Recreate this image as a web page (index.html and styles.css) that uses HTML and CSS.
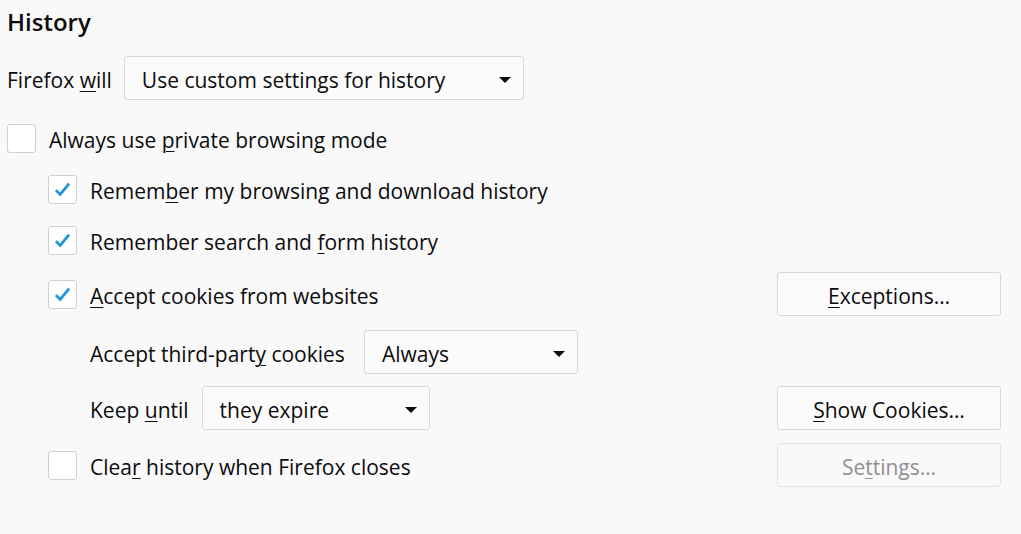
FILE: index.html
```html
<!DOCTYPE html>
<html lang="en">
<head>
  <meta charset="utf-8">
  <title>History</title>
  <link rel="stylesheet" href="styles.css">
</head>
<body>
  <h1 class="heading">History</h1>

  <div class="row row-will">
    <span class="label">Firefox <u>w</u>ill</span>
    <div class="select select-mode"><span class="label">Use custom settings for history</span><span class="arrow"></span></div>
  </div>

  <div class="row row-check row-private">
    <span class="box"></span>
    <span class="label">Always use <u>p</u>rivate browsing mode</span>
  </div>

  <div class="indent">
    <div class="row row-check row-first">
      <span class="box checked"><svg viewBox="0 0 16 16" width="17" height="17"><path d="M1.8 8.6 L5.8 12.6 L14.2 2.4" /></svg></span>
      <span class="label">Remem<u>b</u>er my browsing and download history</span>
    </div>

    <div class="row row-check row-second">
      <span class="box checked"><svg viewBox="0 0 16 16" width="17" height="17"><path d="M1.8 8.6 L5.8 12.6 L14.2 2.4" /></svg></span>
      <span class="label">Remember search and <u>f</u>orm history</span>
    </div>

    <div class="row row-tall row-cookies">
      <div class="left">
        <span class="box checked"><svg viewBox="0 0 16 16" width="17" height="17"><path d="M1.8 8.6 L5.8 12.6 L14.2 2.4" /></svg></span>
        <span class="label"><u>A</u>ccept cookies from websites</span>
      </div>
      <button class="btn"><u>E</u>xceptions…</button>
    </div>

    <div class="sub">
      <div class="row row-tall row-third">
        <span class="label">Accept third-part<u>y</u> cookies</span>
        <div class="select select-third"><span class="label">Always</span><span class="arrow"></span></div>
      </div>
    </div>

    <div class="row row-tall row-keep">
      <div class="left sub">
        <span class="label">Keep <u>u</u>ntil</span>
        <div class="select select-keep"><span class="label">they expire</span><span class="arrow"></span></div>
      </div>
      <button class="btn"><u>S</u>how Cookies…</button>
    </div>

    <div class="row row-tall row-clear">
      <div class="left">
        <span class="box"></span>
        <span class="label">Clea<u>r</u> history when Firefox closes</span>
      </div>
      <button class="btn" disabled>Se<u>t</u>tings…</button>
    </div>
  </div>
</body>
</html>
```

FILE: styles.css
```css
html, body {
  height: 100%;
  margin: 0;
}

body {
  background-color: #f9f9fa;
  color: #0c0c0d;
  font-family: "Open Sans", "Noto Sans", sans-serif;
  font-size: 21px;
  padding: 0 20px 0 7px;
  overflow: hidden;
}

u {
  text-decoration: underline;
  text-underline-offset: 3px;
  text-decoration-thickness: 1px;
}

.heading {
  margin: 0;
  height: 56px;
  padding-top: 5px;
  box-sizing: border-box;
  font-size: 24px;
  font-weight: 600;
  line-height: 34px;
}

.label {
  padding-top: 3px;
}

.row {
  display: flex;
  align-items: center;
}

.row-will {
  height: 44px;
  gap: 12px;
}

.row-check {
  height: 29px;
  gap: 13px;
}

.row-private {
  margin-top: 24px;
}

.indent {
  padding-left: 41px;
}

.row-first,
.row-second {
  margin-top: 22px;
}

.row-tall {
  height: 44px;
  justify-content: space-between;
}

.row-cookies {
  margin-top: 17px;
}

.row-third {
  margin-top: 14px;
  justify-content: flex-start;
  gap: 19px;
}

.row-keep {
  margin-top: 12px;
}

.row-clear {
  margin-top: 13px;
}

.left {
  display: flex;
  align-items: center;
  gap: 13px;
}

.sub {
  padding-left: 42px;
}

.left.sub {
  gap: 13px;
}

.box {
  width: 27px;
  height: 27px;
  border: 1px solid #d0d0d3;
  border-radius: 3px;
  background: #fff;
  display: flex;
  align-items: center;
  justify-content: center;
  flex: none;
}

.box svg path {
  fill: none;
  stroke: #1f95dc;
  stroke-width: 2.6;
  stroke-linejoin: miter;
}

.select {
  position: relative;
  border: 1px solid #d7d7db;
  border-radius: 3px;
  background: #fbfbfb;
  display: flex;
  align-items: center;
  padding-left: 17px;
  box-sizing: border-box;
  height: 44px;
}

.select-mode {
  width: 400px;
}

.select-third {
  width: 214px;
}

.select-keep {
  width: 228px;
}

.arrow {
  position: absolute;
  right: 12px;
  top: 20px;
  width: 0;
  height: 0;
  border-left: 6px solid transparent;
  border-right: 6px solid transparent;
  border-top: 6px solid #0c0c0d;
}

.btn {
  width: 224px;
  height: 44px;
  border: 1px solid #d7d7db;
  border-radius: 3px;
  background: #fbfbfb;
  color: #0c0c0d;
  font-family: inherit;
  font-size: 21px;
  padding: 3px 0 0;
}

.btn:disabled {
  color: #8f8f94;
  border-color: #e4e4e7;
  background: #f9f9fa;
}
```
